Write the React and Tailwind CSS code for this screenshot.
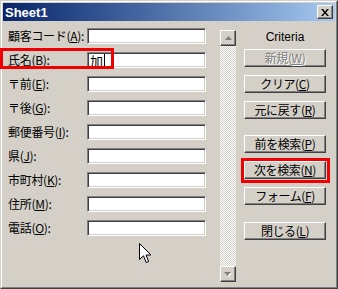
import React from "react";

const rows = [
  ["顧客コード", "A", ""],
  ["氏名", "B", "加"],
  ["〒前", "E", ""],
  ["〒後", "G", ""],
  ["郵便番号", "I", ""],
  ["県", "J", ""],
  ["市町村", "K", ""],
  ["住所", "M", ""],
  ["電話", "O", ""],
];

function Raised({ className = "", children }) {
  return (
    <div
      className={
        "border border-t-white border-l-white border-b-[#404040] border-r-[#404040] shadow-[inset_-1px_-1px_#808080] bg-[#d4d0c8] flex items-center justify-center " +
        className
      }
    >
      {children}
    </div>
  );
}

function Btn({ label, k, disabled, className = "" }) {
  return (
    <Raised className={"w-[82px] h-[18px] " + className}>
      <span
        className={
          "text-[12px] leading-none whitespace-nowrap tracking-[-0.4px] " +
          (disabled ? "text-[#808080] [text-shadow:1px_1px_0_#ffffff]" : "text-black")
        }
      >
        {label}(<span className="underline">{k}</span>)
      </span>
    </Raised>
  );
}

export default function App() {
  return (
    <div className="relative w-[338px] h-[289px] font-['Noto_Sans_CJK_JP',sans-serif] text-[12px] text-black">
      <div className="w-full h-full border border-t-[#d4d0c8] border-l-[#d4d0c8] border-b-[#404040] border-r-[#404040]">
        <div className="w-full h-full border border-t-white border-l-white border-b-[#808080] border-r-[#808080] bg-[#d4d0c8] p-px flex flex-col">
          {/* title bar */}
          <div className="h-[18px] flex items-center justify-between bg-gradient-to-r from-[#0a246a] to-[#a6caf0]">
            <span className="pl-[2px] text-white font-bold text-[13px] leading-none font-['Liberation_Sans',sans-serif]">
              Sheet1
            </span>
            <Raised className="w-[16px] h-[14px] mr-[2px]">
              <svg width="8" height="7" viewBox="0 0 8 7">
                <path d="M0 0h2l2 2.5L6 0h2L5 3.5 8 7H6L4 4.5 2 7H0l3-3.5z" fill="#000" />
              </svg>
            </Raised>
          </div>

          {/* content */}
          <div className="flex-1 flex">
            {/* fields */}
            <div className="pl-[5px] pt-[7px] flex flex-col gap-[8px]">
              {rows.map(([name, k, val]) => (
                <div key={name} className="h-[16px] flex items-center">
                  <div className="w-[79px] whitespace-nowrap leading-none tracking-[-0.3px]">
                    {name}(<span className="underline">{k}</span>):
                  </div>
                  <div className="w-[119px] h-[16px] bg-white border border-t-[#808080] border-l-[#808080] border-b-white border-r-white shadow-[inset_1px_1px_#404040,inset_-1px_-1px_#d4d0c8] flex items-center pl-[2px]">
                    {val && (
                      <>
                        <span className="text-[13px] leading-none">{val}</span>
                        <span className="w-px h-[12px] bg-black ml-[1px]" />
                      </>
                    )}
                  </div>
                </div>
              ))}
            </div>

            {/* scrollbar */}
            <div className="ml-[14px] mt-[9px] w-[16px] h-[252px] flex flex-col">
              <Raised className="w-[16px] h-[16px]">
                <svg width="7" height="4" viewBox="0 0 7 4">
                  <path d="M3.5 0L7 4H0z" fill="#808080" />
                </svg>
              </Raised>
              <div className="flex-1 bg-[repeating-conic-gradient(#ffffff_0_25%,#d4d0c8_0_50%)] bg-[length:2px_2px]" />
              <Raised className="w-[16px] h-[16px]">
                <svg width="8" height="5" viewBox="0 0 8 5">
                  <path d="M1 1h7L4.5 5z" fill="#ffffff" />
                  <path d="M0 0h7L3.5 4z" fill="#808080" />
                </svg>
              </Raised>
            </div>

            {/* buttons */}
            <div className="ml-[8px] pt-[8px] w-[82px] flex flex-col">
              <div className="h-[16px] leading-[16px] text-center mb-[4px] font-['Liberation_Sans',sans-serif]">
                Criteria
              </div>
              <Btn label="新規" k="W" disabled />
              <Btn label="クリア" k="C" className="mt-[8px]" />
              <Btn label="元に戻す" k="R" className="mt-[8px]" />
              <Btn label="前を検索" k="P" className="mt-[16px]" />
              <div className="relative mt-[8px]">
                <Btn label="次を検索" k="N" />
                <div className="absolute -left-[3px] -top-[3px] w-[89px] h-[25px] border-[3px] border-[#f00000]" />
              </div>
              <Btn label="フォーム" k="F" className="mt-[8px]" />
              <Btn label="閉じる" k="L" className="mt-[17px]" />
            </div>
          </div>
        </div>
      </div>

      {/* annotation around 氏名 */}
      <div className="absolute left-0 top-[48px] w-[114px] h-[21px] border-[3px] border-[#f00000]" />

      {/* mouse pointer */}
      <svg className="absolute left-[139px] top-[243px]" width="13" height="21" viewBox="0 0 13 21">
        <path
          d="M0.5 0.5V16.5L4.5 12.8L7.2 19.5L9.6 18.5L7 12H12Z"
          fill="#ffffff"
          stroke="#000000"
          strokeWidth="1"
          strokeLinejoin="miter"
        />
      </svg>
    </div>
  );
}
